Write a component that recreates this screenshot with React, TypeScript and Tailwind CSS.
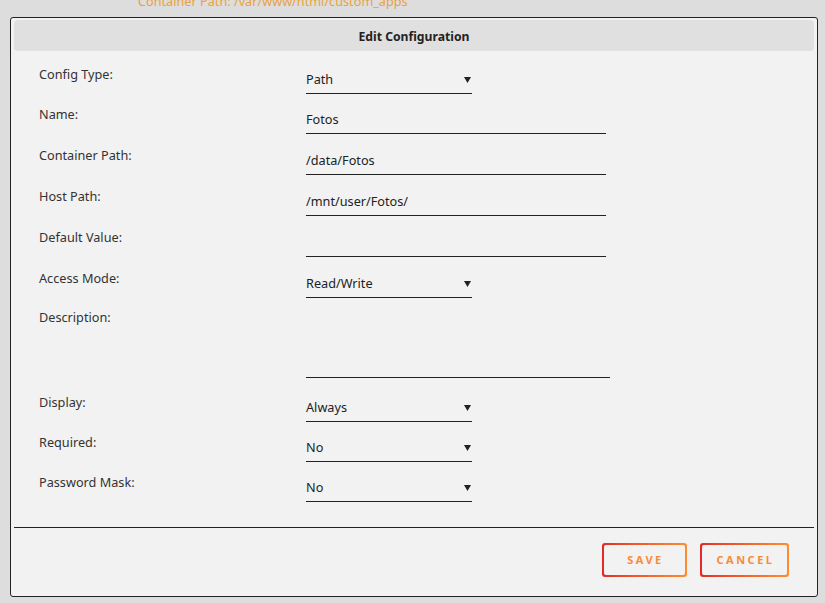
import { ReactNode } from "react"

const font = { fontFamily: '"Noto Sans", "Open Sans", sans-serif' }

function Row({ label, h, children }: { label: string; h: string; children: ReactNode }) {
  return (
    <div className={`flex ${h}`}>
      <div className="w-[267px] shrink-0 text-[12.7px] leading-[18px] text-[#333]">{label}</div>
      <div className="mt-[5px]">{children}</div>
    </div>
  )
}

function Select({ value }: { value: string }) {
  return (
    <div className="flex w-[166px] items-center justify-between border-b border-[#222] pb-[5px] text-[12.7px] leading-[18px] text-[#222]">
      <span>{value}</span>
      <svg width="7" height="6" viewBox="0 0 7 6" className="mr-[1px] mt-[1px]">
        <path d="M0 0h7L3.5 6z" fill="#222" />
      </svg>
    </div>
  )
}

function Input({ value = "", w = "w-[300px]" }: { value?: string; w?: string }) {
  return (
    <div className={`${w} h-[24px] border-b border-[#222] pb-[5px] text-[12.7px] leading-[18px] text-[#222]`}>{value}</div>
  )
}

function Button({ label, w }: { label: string; w: string }) {
  return (
    <div className={`${w} h-[34px] rounded-[3px] bg-gradient-to-r from-[#e22828] to-[#ff8c2f] p-[2px]`}>
      <div className="flex h-full items-center justify-center rounded-[2px] bg-[#f2f2f2]">
        <span className="pl-[2px] text-[11px] font-bold tracking-[2.5px] text-[#f98a36]">{label}</span>
      </div>
    </div>
  )
}

export default function App() {
  return (
    <div className="min-h-[603px] w-[825px] bg-[#dddddd]" style={font}>
      <div className="h-[17px] overflow-hidden">
        <p className="-mt-[8px] pl-[138px] text-[12.7px] leading-[18px] text-[#e8a33d]">Container Path: /var/www/html/custom_apps</p>
      </div>
      <div className="ml-[10px] h-[580px] w-[808px] rounded-[3px] border border-[#222] bg-[#f2f2f2] px-[3px] pt-[2px]">
        <div className="flex h-[31px] items-center justify-center rounded-[4px] bg-[#e0e0e0] pt-[3px] text-[12.2px] font-bold text-[#222]">
          Edit Configuration
        </div>
        <div className="pl-[25px] pt-[14px]">
          <Row label="Config Type:" h="h-[40px]"><Select value="Path" /></Row>
          <Row label="Name:" h="h-[41px]"><Input value="Fotos" /></Row>
          <Row label="Container Path:" h="h-[41px]"><Input value="/data/Fotos" /></Row>
          <Row label="Host Path:" h="h-[41px]"><Input value="/mnt/user/Fotos/" /></Row>
          <Row label="Default Value:" h="h-[41px]"><Input /></Row>
          <Row label="Access Mode:" h="h-[39px]"><Select value="Read/Write" /></Row>
          <Row label="Description:" h="h-[85px]">
            <div className="h-[65px] w-[304px] border-b border-[#222]" />
          </Row>
          <Row label="Display:" h="h-[40px]"><Select value="Always" /></Row>
          <Row label="Required:" h="h-[40px]"><Select value="No" /></Row>
          <Row label="Password Mask:" h="h-[39px]"><Select value="No" /></Row>
        </div>
        <div className="mt-[15px] border-t border-[#222]" />
        <div className="flex justify-end gap-[13px] pr-[25px] pt-[15px]">
          <Button label="SAVE" w="w-[85px]" />
          <Button label="CANCEL" w="w-[89px]" />
        </div>
      </div>
    </div>
  )
}
